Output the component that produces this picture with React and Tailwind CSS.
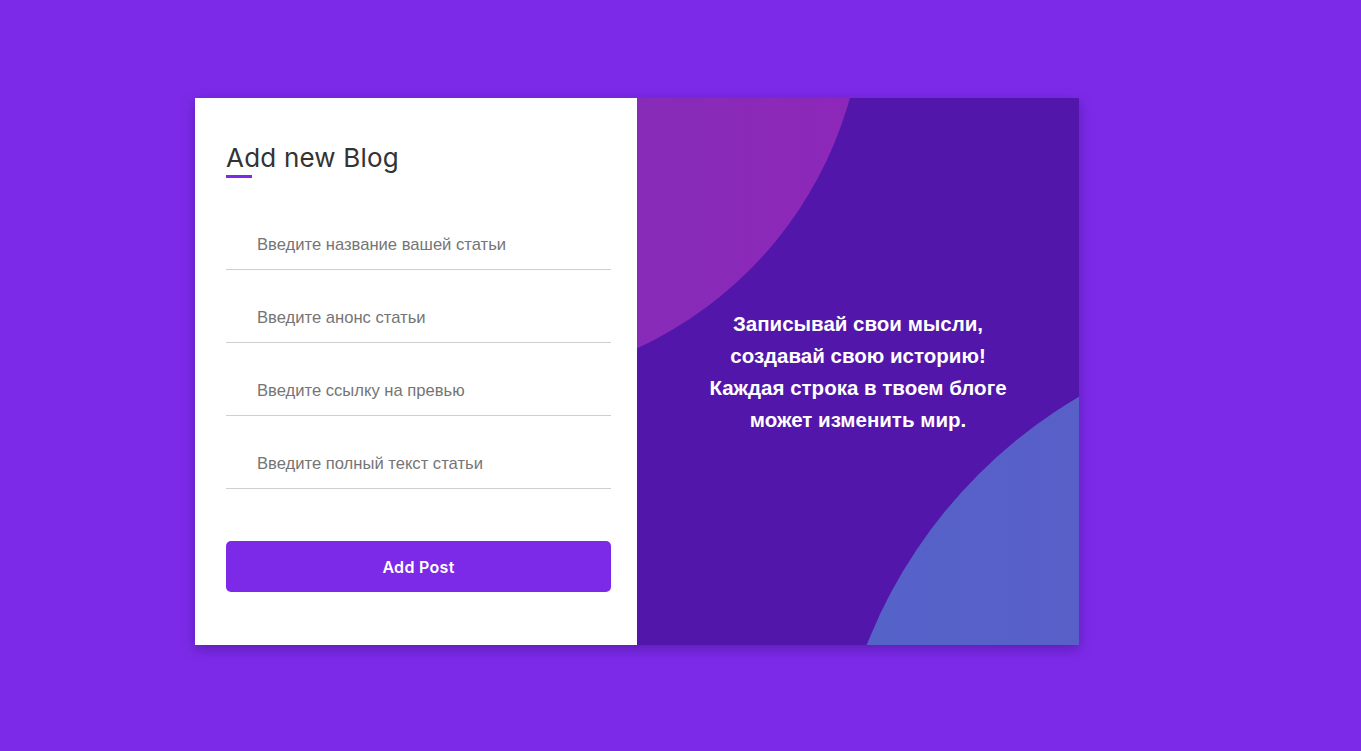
const fields = [
    'Введите название вашей статьи',
    'Введите анонс статьи',
    'Введите ссылку на превью',
    'Введите полный текст статьи',
]

const App = () => {
    return (
        <div className="min-h-screen w-full bg-[#7c2ae8] flex justify-start pt-[98px] pl-[195px]">
            <div className="flex w-[884px] h-[547px] shadow-[0_4px_12px_rgba(40,0,90,0.35)]">
                <div className="w-[442px] h-full bg-white pl-[31px] pr-[26px] pt-[42px] flex flex-col">
                    <h1 className="text-[26px] leading-[36px] text-[#333] font-['Inter',sans-serif] font-normal tracking-[0.2px]">Add new Blog</h1>
                    <div className="w-[26px] h-[3px] bg-[#7c2ae8] -mt-[1px]"></div>
                    <form className="flex flex-col mt-[20px]" onSubmit={(e) => e.preventDefault()}>
                        {fields.map((placeholder) => (
                            <input
                                key={placeholder}
                                type="text"
                                placeholder={placeholder}
                                className="h-[50px] mt-[23px] first:mt-[22px] w-full border-b-[1.5px] border-[#cfcfcf] pl-[31px] text-[16.6px] font-['Liberation_Sans',Arial,sans-serif] text-[#333] placeholder:text-[#757575] outline-none bg-transparent"
                            />
                        ))}
                        <button className="mt-[52px] h-[51px] w-full rounded-[5px] bg-[#7c2ae8] text-white text-[16px] font-semibold font-['Inter',sans-serif] tracking-[0.3px]">Add Post</button>
                    </form>
                </div>
                <div className="relative w-[442px] h-full bg-[#5216aa] overflow-hidden flex items-center justify-center">
                    <div className="absolute left-[-553px] top-[-494px] w-[780px] h-[780px] rounded-full bg-gradient-to-r from-[#7433b6] to-[#8e27b9]"></div>
                    <div className="absolute left-[195px] top-[230px] w-[1000px] h-[1000px] rounded-full bg-gradient-to-r from-[#5463c9] to-[#6552c4]"></div>
                    <p className="relative text-center text-white font-bold text-[20.5px] leading-[32px] font-['Liberation_Sans',Arial,sans-serif]">
                        Записывай свои мысли,<br />
                        создавай свою историю!<br />
                        Каждая строка в твоем блоге<br />
                        может изменить мир.
                    </p>
                </div>
            </div>
        </div>
    )
}

export default App;
